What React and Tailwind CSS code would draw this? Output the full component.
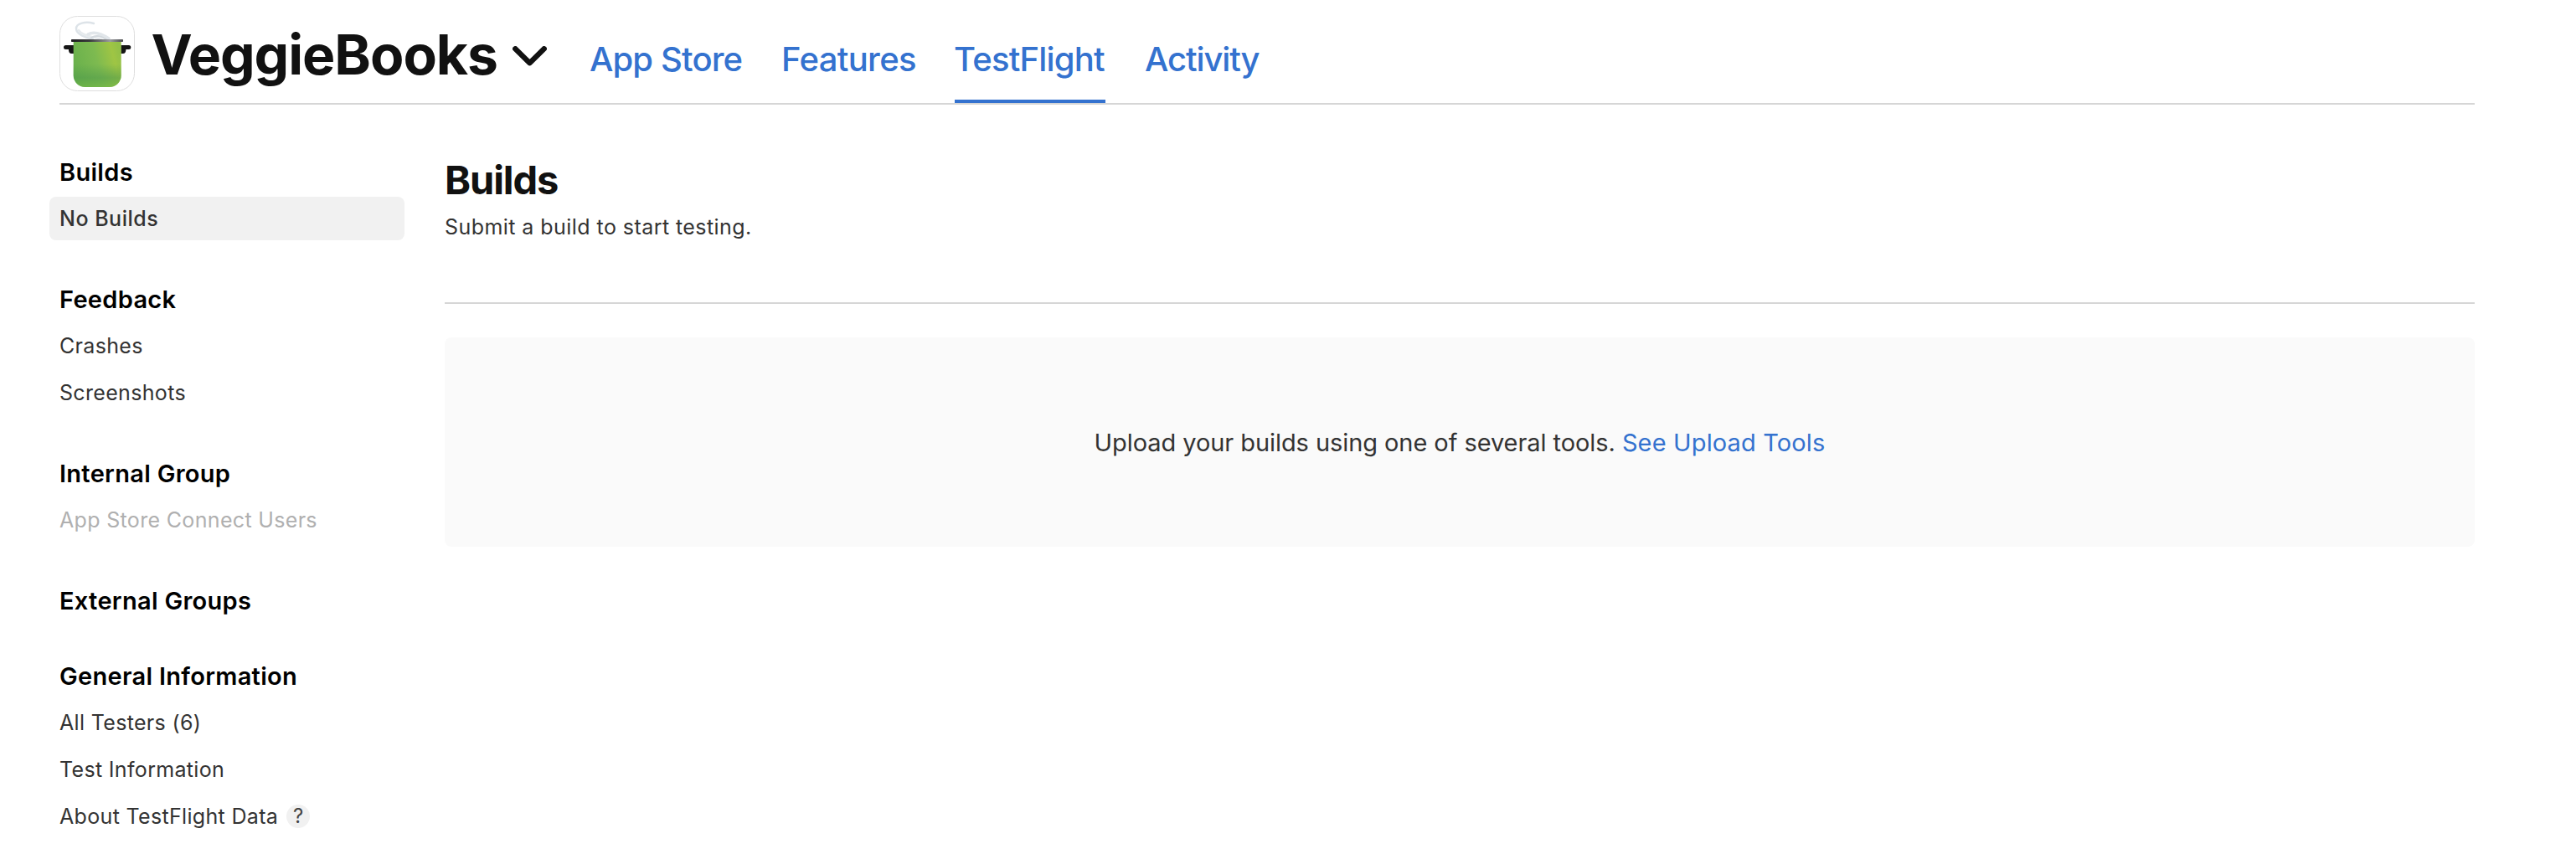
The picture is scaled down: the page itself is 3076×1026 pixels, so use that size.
const tabs = [
  { label: 'App Store', style: 'w-[180px] tracking-[-0.86px] -indent-px' },
  { label: 'Features', style: 'w-[159px] tracking-[-0.66px]' },
  { label: 'TestFlight', style: 'w-[180px] tracking-[-0.8px] -indent-px', active: true },
  { label: 'Activity', style: 'w-[140px] tracking-[-1.1px] -indent-px' },
];

const groups = [
  { title: 'Builds', items: [{ label: 'No Builds', active: true }] },
  { title: 'Feedback', items: [{ label: 'Crashes' }, { label: 'Screenshots' }] },
  { title: 'Internal Group', items: [{ label: 'App Store Connect Users', muted: true }] },
  { title: 'External Groups', items: [] },
  {
    title: 'General Information',
    items: [
      { label: 'All Testers (6)' },
      { label: 'Test Information' },
      { label: 'About TestFlight Data', help: true },
    ],
  },
];

function AppIcon() {
  return (
    <svg width="90" height="90" viewBox="0 0 90 90" className="mt-[19px] shrink-0">
      <defs>
        <linearGradient id="pot" x1="0" y1="0.6" x2="1" y2="0.35">
          <stop offset="0" stopColor="#68b04c" />
          <stop offset="0.5" stopColor="#7dba50" />
          <stop offset="0.85" stopColor="#9fc544" />
          <stop offset="1" stopColor="#93c047" />
        </linearGradient>
        <linearGradient id="shade" x1="0" y1="0" x2="0" y2="1">
          <stop offset="0.5" stopColor="#4f9a4b" stopOpacity="0" />
          <stop offset="0.8" stopColor="#4f9a4b" stopOpacity="0.55" />
          <stop offset="1" stopColor="#6db544" stopOpacity="0.5" />
        </linearGradient>
        <linearGradient id="rim" x1="0" y1="0" x2="1" y2="0">
          <stop offset="0" stopColor="#1c1c1e" />
          <stop offset="0.35" stopColor="#3a3b3d" />
          <stop offset="0.75" stopColor="#9a9c9f" />
          <stop offset="1" stopColor="#4a4b4d" />
        </linearGradient>
        <filter id="soft" x="-20%" y="-20%" width="140%" height="140%">
          <feGaussianBlur stdDeviation="0.7" />
        </filter>
      </defs>
      <rect x="0.5" y="0.5" width="89" height="89" rx="21" fill="#fff" stroke="#dedede" />
      <g fill="none" strokeLinecap="round" filter="url(#soft)">
        <path d="M41 9 C31 6 20 9 20 15 C20 22 31 26 40 27.500" stroke="#dde3e8" strokeWidth="2.500" />
        <path d="M23 17 C27 24 42 25 50 28" stroke="#e6eaed" strokeWidth="2.500" />
        <path d="M34 22 C41 18 50 21 59 27" stroke="#e1e6ea" strokeWidth="3.500" />
        <path d="M38 26 C44 22 50 24 56 28" stroke="#d3d9de" strokeWidth="2" />
      </g>
      <path d="M7.500 35H17v10h-2.500c-2.500 0-3.600-2-3.600-5H7.500a2.500 2.500 0 0 1 0-5Z" fill="#161616" />
      <path d="M82.800 35H73.300v10h2.500c2.500 0 3.600-2 3.600-5h3.400a2.500 2.500 0 0 0 0-5Z" fill="#161616" />
      <path d="M16.700 30h57v41a14 14 0 0 1-14 14h-29a14 14 0 0 1-14-14Z" fill="url(#pot)" />
      <path d="M16.700 30h57v41a14 14 0 0 1-14 14h-29a14 14 0 0 1-14-14Z" fill="url(#shade)" />
      <rect x="14" y="28" width="62" height="3" rx="0.8" fill="url(#rim)" />
    </svg>
  );
}

function Header() {
  return (
    <header className="ml-[71px] mr-[121px] flex h-[125px] items-start border-b-2 border-[#d6d6d6]">
      <AppIcon />
      <button className="ml-[19.5px] mt-5 flex h-[90px] w-[524.5px] shrink-0 items-center">
        <span className="w-[431px] text-left text-[66px] font-bold leading-[90px] tracking-[-1.05px] text-[#111]">
          VeggieBooks
        </span>
        <svg width="41" height="24" viewBox="0 0 41 24" className="mt-1 shrink-0" fill="none">
          <path d="M3.300 3.300 20.500 20.200 37.700 3.300" stroke="#111" strokeWidth="6.400" strokeLinecap="round" strokeLinejoin="round" />
        </svg>
      </button>
      <nav className="flex gap-12">
        {tabs.map((tab) => (
          <a
            key={tab.label}
            className={`h-[123px] whitespace-nowrap border-b-4 pt-[46px] text-[40px] font-medium leading-[49px] text-[#3472cf] ${tab.style} ${
              tab.active ? 'border-[#3472cf]' : 'border-transparent'
            }`}
          >
            {tab.label}
          </a>
        ))}
      </nav>
    </header>
  );
}

function SidebarItem({ label, active, muted, help }) {
  return (
    <li
      className={`flex h-[52px] items-center rounded-lg px-3 pt-0.5 text-[25px] ${
        active ? 'bg-[#f1f1f1] font-medium tracking-[0.5px]' : 'tracking-[0.33px]'
      } ${muted ? 'text-[#b0b0b0]' : 'text-[#333]'}`}
    >
      {label}
      {help && (
        <span className="-mt-0.5 ml-[10px] flex size-7 items-center justify-center rounded-full bg-[#f1f1f1] text-[24px] leading-none tracking-normal text-[#444]">
          ?
        </span>
      )}
    </li>
  );
}

function Sidebar() {
  return (
    <aside className="ml-[59px] flex w-[424px] shrink-0 flex-col gap-11 pt-[57px]">
      {groups.map((group) => (
        <section key={group.title}>
          <h3 className="h-[46px] pl-3 text-[29px] font-semibold leading-[48px] tracking-[0.3px] text-black">{group.title}</h3>
          {group.items.length > 0 && (
            <ul className="flex flex-col gap-1 pb-[3px] pt-[7px]">
              {group.items.map((item) => (
                <SidebarItem key={item.label} {...item} />
              ))}
            </ul>
          )}
        </section>
      ))}
    </aside>
  );
}

function Builds() {
  return (
    <main className="ml-12 mr-[121px] flex-1">
      <div className="h-[238px] border-b-2 border-[#d6d6d6] pt-[60px]">
        <h1 className="text-[47px] font-bold leading-[60px] tracking-[-1.1px] text-[#111]">Builds</h1>
        <p className="mt-[10px] text-[25px] leading-8 tracking-[0.44px] text-[#333]">Submit a build to start testing.</p>
      </div>
      <div className="mt-10 flex h-[250px] items-center justify-center rounded-lg bg-[#fafafa] pt-0.5 text-[29px] text-[#333]">
        <p>
          <span className="tracking-[-0.07px]">Upload your builds using one of several tools. </span>
          <a className="tracking-[0.14px] text-[#3472cf]">See Upload Tools</a>
        </p>
      </div>
    </main>
  );
}

export default function App() {
  return (
    <div className="h-[1026px] overflow-hidden bg-white font-['Inter',sans-serif]">
      <Header />
      <div className="flex">
        <Sidebar />
        <Builds />
      </div>
    </div>
  );
}
